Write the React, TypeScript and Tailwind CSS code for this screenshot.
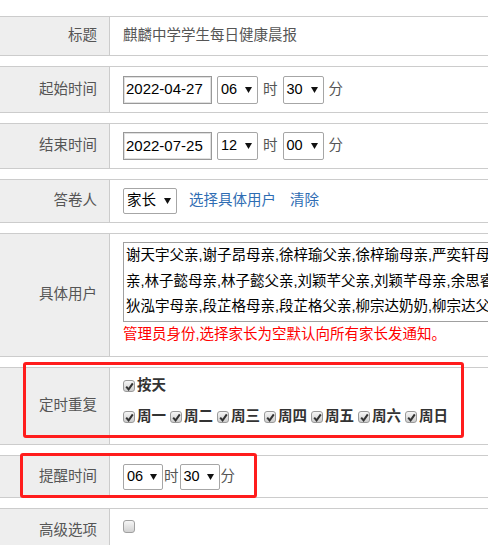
import React from "react";

type SelProps = { v: string; cls: string };

// fake select box with small black triangle
const Sel = ({ v, cls }: SelProps) => (
  <div
    className={`flex items-center justify-between rounded-[2px] border border-[#a6a6a6] bg-white pl-[3px] pr-[5px] text-black ${cls}`}
  >
    <span>{v}</span>
    <svg width="7" height="6" viewBox="0 0 7 6">
      <path d="M0 0H7L3.5 6Z" fill="#111" />
    </svg>
  </div>
);

const Cb = ({ on = true }: { on?: boolean }) => (
  <span className="inline-flex h-[12px] w-[12px] shrink-0 items-center justify-center rounded-[3px] border border-[#9a9a9a] bg-linear-to-b from-[#f6f6f6] to-[#cdcdcd]">
    {on && (
      <svg width="9" height="9" viewBox="0 0 9 9">
        <path d="M1.2 4.6L3.6 7.4L7.8 1.4" stroke="#333" strokeWidth="2" fill="none" />
      </svg>
    )}
  </span>
);

type RowProps = { label: string; h: string; children: React.ReactNode; body?: string };

const Row = ({ label, h, children, body }: RowProps) => (
  <div className={`flex border-y border-[#ccc] ${h}`}>
    <div className="flex w-[110px] shrink-0 items-center justify-end border-r border-[#ccc] bg-[#eee] pr-3 text-[#555]">
      {label}
    </div>
    <div className={`min-w-0 flex-1 pl-[13px] ${body ?? "flex items-center"}`}>{children}</div>
  </div>
);

const DateBox = ({ v }: { v: string }) => (
  <div className="flex h-[28px] w-[89px] items-center border border-[#999] pl-[2px] text-[15px] text-black shadow-[inset_0_0_0_1px_#e0e0e0]">
    {v}
  </div>
);

const weekdays = ["周一", "周二", "周三", "周四", "周五", "周六", "周日"];

export default function App() {
  return (
    <div className="relative h-[545px] w-[488px] overflow-hidden bg-white font-['Liberation_Sans','Noto_Sans_CJK_SC',sans-serif] text-[14.5px]">
      <div className="flex flex-col gap-[10px] pt-4">
        <Row label="标题" h="h-[40px]">
          <span className="text-[#555]">麒麟中学学生每日健康晨报</span>
        </Row>

        <Row label="起始时间" h="h-[47px]">
          <DateBox v="2022-04-27" />
          <Sel v="06" cls="ml-[5px] h-[28px] w-[41px]" />
          <span className="mx-[5px] text-[#555]">时</span>
          <Sel v="30" cls="h-[28px] w-[41px]" />
          <span className="ml-[5px] text-[#555]">分</span>
        </Row>

        <Row label="结束时间" h="h-[46px]">
          <DateBox v="2022-07-25" />
          <Sel v="12" cls="ml-[5px] h-[28px] w-[41px]" />
          <span className="mx-[5px] text-[#555]">时</span>
          <Sel v="00" cls="h-[28px] w-[41px]" />
          <span className="ml-[5px] text-[#555]">分</span>
        </Row>

        <Row label="答卷人" h="h-[44px]">
          <Sel v="家长" cls="h-[26px] w-[54px]" />
          <span className="ml-3 text-[#2f6db3]">选择具体用户</span>
          <span className="ml-[14px] text-[#2f6db3]">清除</span>
        </Row>

        <Row label="具体用户" h="h-[124px]" body="pt-2">
          <div className="h-[80px] w-[420px] overflow-hidden whitespace-nowrap border border-[#a0a0a0] pl-[2px] leading-[25.5px] text-black">
            <div>谢天宇父亲,谢子昂母亲,徐梓瑜父亲,徐梓瑜母亲,严奕轩母</div>
            <div>亲,林子懿母亲,林子懿父亲,刘颖芊父亲,刘颖芊母亲,余思睿</div>
            <div>狄泓宇母亲,段芷格母亲,段芷格父亲,柳宗达奶奶,柳宗达父</div>
          </div>
          <div className="mt-[1px] leading-[22px] text-[#f00]">
            管理员身份,选择家长为空默认向所有家长发通知。
          </div>
        </Row>

        <Row label="定时重复" h="h-[78px]" body="flex flex-col pt-[7px]">
          <div className="flex h-[22px] items-center font-bold text-[#333]">
            <Cb />
            <span className="ml-[2px]">按天</span>
          </div>
          <div className="mt-[9px] flex h-[22px] items-center font-bold text-[#333]">
            {weekdays.map((d) => (
              <div key={d} className="mr-[4px] flex items-center">
                <Cb />
                <span className="ml-[2px]">{d}</span>
              </div>
            ))}
          </div>
        </Row>

        <Row label="提醒时间" h="h-[43px]">
          <Sel v="06" cls="h-[26px] w-[40px]" />
          <span className="mx-[1px] text-[#555]">时</span>
          <Sel v="30" cls="h-[26px] w-[40px]" />
          <span className="ml-[1px] text-[#555]">分</span>
        </Row>

        <Row label="高级选项" h="h-[46px]" body="pt-[9px]">
          <span className="inline-flex h-[13px] w-[12px] rounded-[3px] border border-[#a0a0a0] bg-linear-to-b from-[#f6f6f6] to-[#d2d2d2]" />
        </Row>
      </div>

      {/* red annotation boxes */}
      <div className="absolute left-[23px] top-[362px] h-[76px] w-[441px] rounded-[3px] border-[3px] border-[#ff1c1c]" />
      <div className="absolute left-[20px] top-[453px] h-[45px] w-[237px] rounded-[3px] border-[3px] border-[#ff1c1c]" />
    </div>
  );
}
